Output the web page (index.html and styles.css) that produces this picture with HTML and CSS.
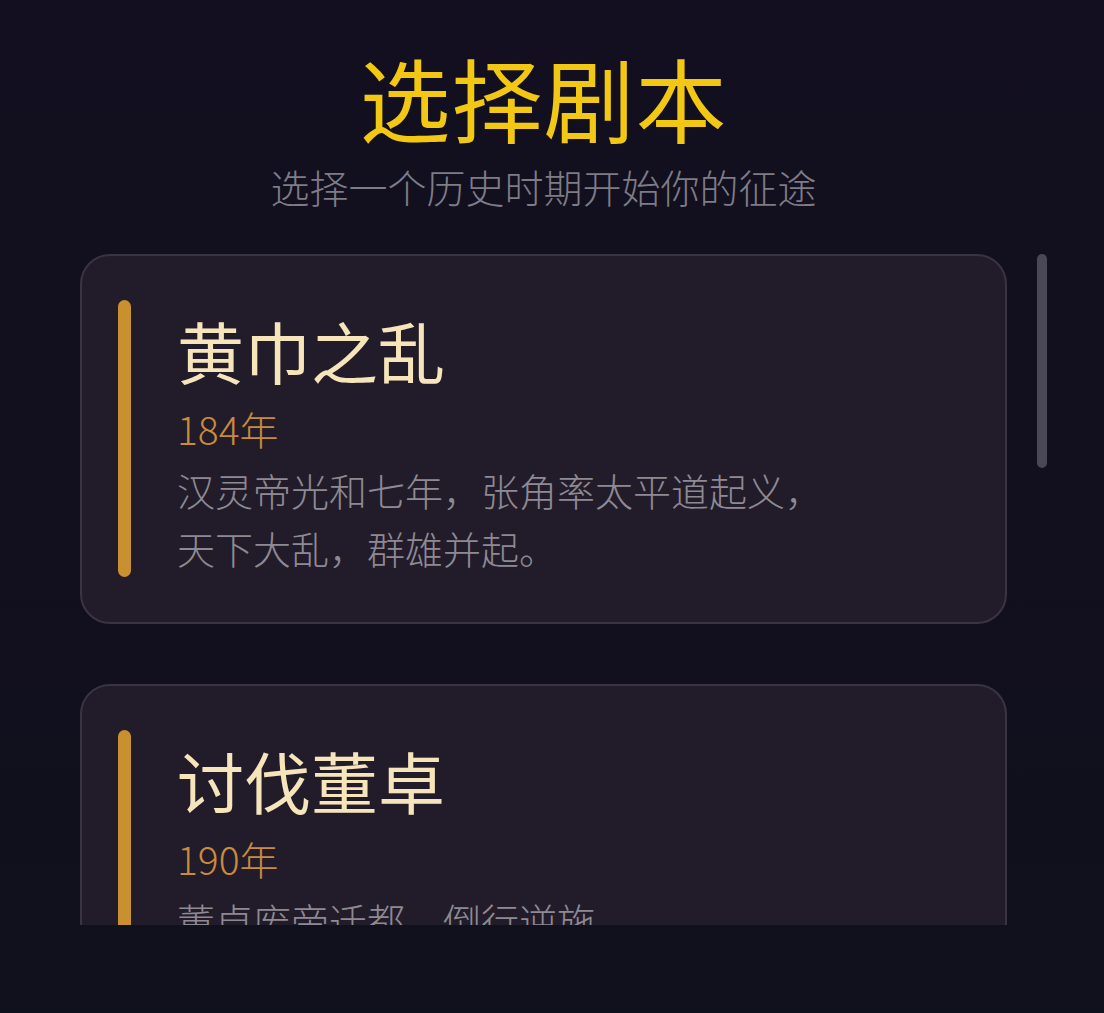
FILE: index.html
```html
<!DOCTYPE html>
<html lang="zh-CN">
<head>
<meta charset="utf-8">
<title>选择剧本</title>
<link rel="stylesheet" href="styles.css">
</head>
<body>
<div class="page">
  <div class="column">
    <header class="header">
      <h1 class="title">选择剧本</h1>
      <p class="subtitle">选择一个历史时期开始你的征途</p>
    </header>
    <div class="list-wrap">
      <div class="list">
        <div class="card">
          <div class="accent"></div>
          <div class="card-body">
            <h2 class="card-title">黄巾之乱</h2>
            <div class="card-year">184年</div>
            <p class="card-desc">汉灵帝光和七年，张角率太平道起义，天下大乱，群雄并起。</p>
          </div>
        </div>
        <div class="card">
          <div class="accent"></div>
          <div class="card-body">
            <h2 class="card-title">讨伐董卓</h2>
            <div class="card-year">190年</div>
            <p class="card-desc">董卓废帝迁都，倒行逆施。</p>
          </div>
        </div>
      </div>
      <div class="scroll-thumb"></div>
    </div>
  </div>
</div>
</body>
</html>
```
FILE: styles.css
```css
html, body {
  margin: 0;
  padding: 0;
}
body {
  background: linear-gradient(180deg, #130f20 0%, #120f1f 50%, #0f111c 100%);
  font-family: "Noto Sans CJK SC", "Noto Sans", sans-serif;
  width: 1104px;
  height: 1013px;
  overflow: hidden;
}
.page {
  height: 1013px;
  overflow: hidden;
}
.column {
  margin-left: 80px;
  width: 927px;
}
.header {
  text-align: center;
  padding-top: 46px;
}
.title {
  margin: 0;
  font-size: 91px;
  line-height: 100px;
  font-weight: 400;
  color: #f2c814;
  letter-spacing: 1px;
}
.subtitle {
  margin: 20px 0 0;
  font-size: 39px;
  line-height: 40px;
  color: #7f7c86;
  font-weight: 300;
}
.list-wrap {
  position: relative;
  margin-top: 48px;
  width: 927px;
  height: 671px;
}
.list {
  height: 100%;
  overflow: hidden;
  display: flex;
  flex-direction: column;
  gap: 60px;
}
.card {
  flex: none;
  display: flex;
  gap: 46px;
  padding: 44px 36px 45px;
  background: #221c2a;
  border: 2px solid #3a3442;
  border-radius: 30px;
}
.accent {
  flex: none;
  width: 13px;
  border-radius: 7px;
  background: #c8902e;
}
.card-body {
  flex: 1;
  min-width: 0;
}
.card-title {
  margin: 10px 0 14px;
  font-size: 67px;
  line-height: 80px;
  font-weight: 400;
  color: #f6e4bb;
}
.card-year {
  font-size: 39px;
  line-height: 48px;
  color: #c98b3d;
  font-weight: 300;
}
.card-desc {
  margin: 9px 0 0;
  max-width: 680px;
  font-size: 38px;
  line-height: 58px;
  color: #8e8a93;
  font-weight: 300;
}
.scroll-thumb {
  position: absolute;
  left: 957px;
  top: 0;
  width: 10px;
  height: 214px;
  border-radius: 5px;
  background: #4a4757;
}
```
